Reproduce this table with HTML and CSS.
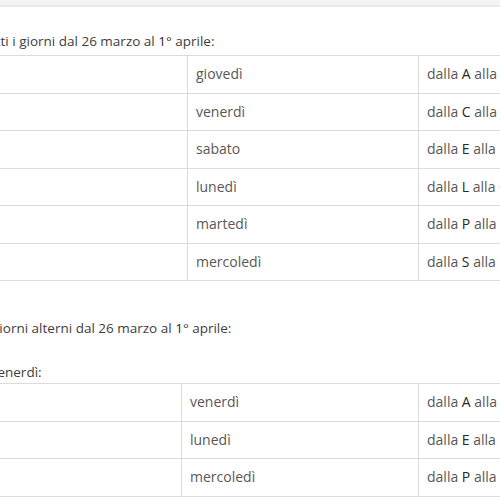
FILE: index.html
```html
<!DOCTYPE html>
<html lang="it">
<head>
<meta charset="utf-8">
<link rel="stylesheet" href="styles.css">
</head>
<body>
<div class="topbar"></div>
<div class="content">
  <p class="lead lead-first">Tutti i giorni dal 26 marzo al <span class="em">1</span>° aprile:</p>
  <table class="sched sched-a">
    <tr><td class="c1"></td><td class="c2">giovedì</td><td class="c3">dalla <span class="em">A</span> alla B</td></tr>
    <tr><td class="c1"></td><td class="c2">venerdì</td><td class="c3">dalla <span class="em">C</span> alla D</td></tr>
    <tr><td class="c1"></td><td class="c2">sabato</td><td class="c3">dalla <span class="em">E</span> alla I</td></tr>
    <tr><td class="c1"></td><td class="c2">lunedì</td><td class="c3">dalla <span class="em">L</span> alla O</td></tr>
    <tr><td class="c1"></td><td class="c2">martedì</td><td class="c3">dalla <span class="em">P</span> alla R</td></tr>
    <tr><td class="c1"></td><td class="c2">mercoledì</td><td class="c3">dalla <span class="em">S</span> alla Z</td></tr>
  </table>
  <p class="lead lead-second">A giorni alterni dal 26 marzo al <span class="em">1</span>° aprile:</p>
  <p class="lead lead-third">Il venerdì:</p>
  <table class="sched sched-b">
    <tr><td class="c1"></td><td class="c2">venerdì</td><td class="c3">dalla <span class="em">A</span> alla D</td></tr>
    <tr><td class="c1"></td><td class="c2">lunedì</td><td class="c3">dalla <span class="em">E</span> alla O</td></tr>
    <tr><td class="c1"></td><td class="c2">mercoledì</td><td class="c3">dalla <span class="em">P</span> alla Z</td></tr>
  </table>
</div>
</body>
</html>
```
FILE: styles.css
```css
html, body {
  margin: 0;
  padding: 0;
  background: #ffffff;
  overflow: hidden;
}
body {
  font-family: "Open Sans", "Noto Sans", sans-serif;
  font-size: 14px;
  color: #3e3e3c;
}
.topbar {
  height: 5px;
  background: #f4f4f4;
  border-bottom: 2px solid #e9e9e9;
}
.content {
  margin-left: -20px;
  width: 800px;
}
.lead {
  margin: 0;
  font-size: 13.5px;
  line-height: 22px;
  color: #3e3e3c;
}
.lead-first { margin-top: 23px; margin-bottom: 3px; }
.lead-second { margin-top: 36px; }
.lead-third { margin-top: 22px; margin-bottom: 0; }
.em { color: #2b1a3a; }
.sched {
  border-collapse: collapse;
  table-layout: fixed;
}
.sched td {
  border: 1px solid #dddbda;
  padding: 7px 8px;
  line-height: 22.5px;
  height: 22.5px;
  color: #5a5856;
  white-space: nowrap;
}
.sched .em { color: #2b2826; }
.sched-a .c1 { width: 190px; }
.sched-a .c2 { width: 214px; }
.sched-a .c3 { width: 200px; }
.sched-b .c1 { width: 184px; }
.sched-b .c2 { width: 220px; }
.sched-b .c3 { width: 200px; }
```
